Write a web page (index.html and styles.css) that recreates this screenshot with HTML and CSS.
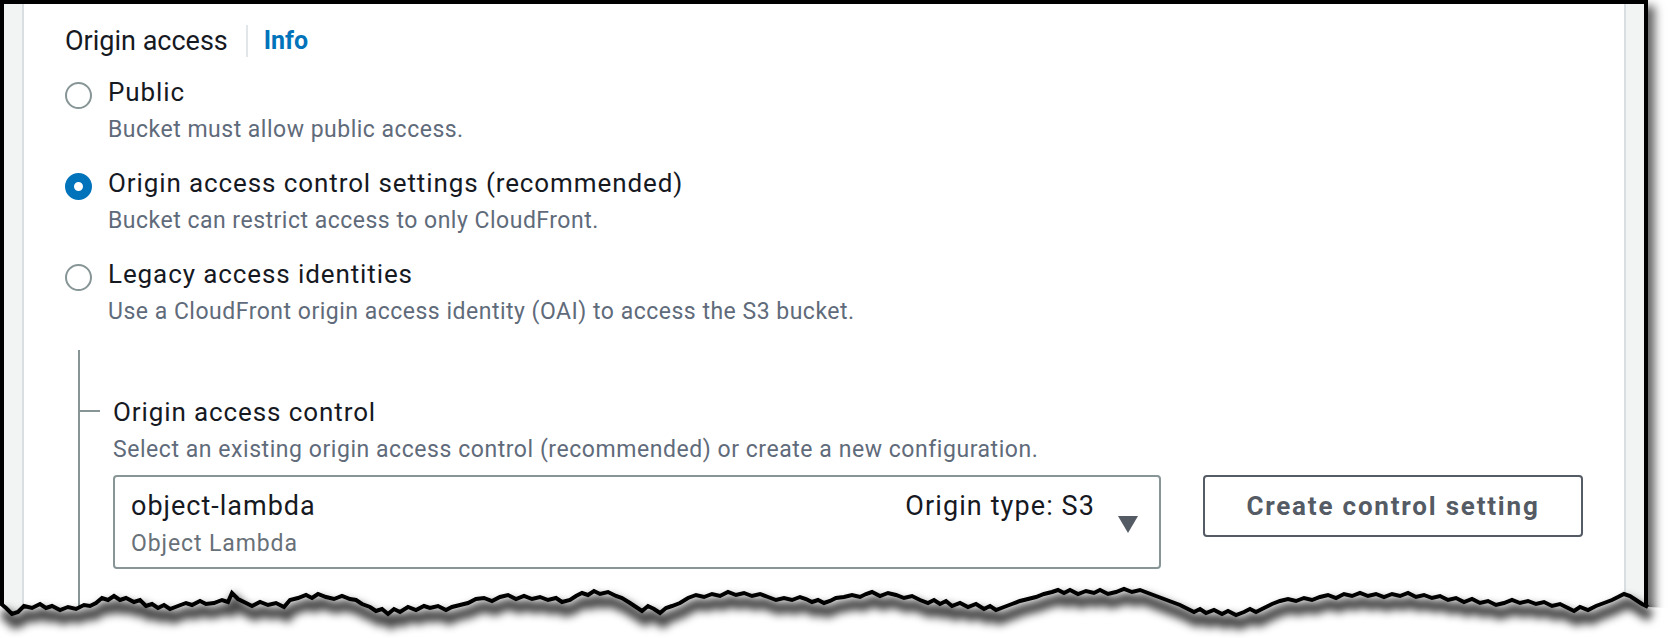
FILE: index.html
```html
<!DOCTYPE html>
<html lang="en">
<head>
<meta charset="utf-8">
<title>Origin access</title>
<link rel="stylesheet" href="styles.css">
</head>
<body>
<div class="frame">
  <div class="paper">
    <div class="strip strip-left"></div>
    <main class="main">
      <div class="field-head">
        <span class="field-title">Origin access</span>
        <span class="sep"></span>
        <a class="info">Info</a>
      </div>
      <div class="options">
        <div class="option">
          <span class="radio"></span>
          <div class="option-text">
            <div class="option-label">Public</div>
            <div class="option-desc">Bucket must allow public access.</div>
          </div>
        </div>
        <div class="option">
          <span class="radio radio-on"></span>
          <div class="option-text">
            <div class="option-label">Origin access control settings (recommended)</div>
            <div class="option-desc">Bucket can restrict access to only CloudFront.</div>
          </div>
        </div>
        <div class="option">
          <span class="radio"></span>
          <div class="option-text">
            <div class="option-label">Legacy access identities</div>
            <div class="option-desc">Use a CloudFront origin access identity (OAI) to access the S3 bucket.</div>
          </div>
        </div>
      </div>
      <section class="expand">
        <div class="sub-title">Origin access control</div>
        <div class="sub-desc">Select an existing origin access control (recommended) or create a new configuration.</div>
        <div class="control-row">
          <div class="select">
            <div class="select-main">
              <div class="select-name">object-lambda</div>
              <div class="select-sub">Object Lambda</div>
            </div>
            <div class="select-meta">Origin type: S3</div>
            <svg class="caret" width="20" height="17" viewBox="0 0 20 17"><polygon points="0,0 20,0 10,17" fill="#545b64"/></svg>
          </div>
          <button class="btn">Create control setting</button>
        </div>
      </section>
    </main>
    <div class="strip strip-right"></div>
  </div>
  <svg class="torn" width="1668" height="638" viewBox="0 0 1668 638">
    <defs>
      <filter id="blur" x="-5%" y="-200%" width="110%" height="500%">
        <feGaussianBlur stdDeviation="4"/>
      </filter>
      <polyline id="edge" points="0,603 6,608 12,614 18,612 24,606 32,608 40,604 46,608 52,606 60,610 68,607 76,609 84,605 90,606 96,603 102,598 108,600 114,596 120,600 126,598 134,602 140,600 146,606 152,604 158,608 164,605 170,609 178,606 186,603 192,605 200,601 206,604 214,603 222,600 228,602 232,593 238,599 246,603 252,606 260,602 268,605 276,603 284,607 290,600 298,598 306,595 312,598 318,594 326,597 334,599 342,596 350,599 356,600 362,604 370,607 376,611 382,609 388,614 394,609 400,612 408,607 416,610 424,606 430,608 438,606 446,610 452,607 460,605 468,603 476,599 484,598 492,601 500,597 508,595 516,599 524,596 532,599 540,597 548,600 556,598 562,602 570,600 576,596 582,593 588,595 594,591 600,594 608,592 616,596 622,598 630,603 636,607 642,611 648,606 654,609 660,613 666,608 672,606 680,603 688,598 696,595 704,597 712,594 720,596 728,592 736,595 744,593 752,596 760,594 768,597 776,600 784,598 792,600 800,597 806,599 812,602 818,600 824,603 830,601 836,598 844,597 852,595 860,597 866,594 872,592 880,596 888,593 896,595 904,598 912,596 920,600 928,603 934,600 940,604 946,601 952,606 960,603 968,607 976,604 984,609 990,606 996,610 1004,607 1012,604 1020,601 1028,599 1036,597 1044,594 1052,592 1058,590 1064,593 1070,590 1078,594 1086,591 1094,593 1100,590 1108,594 1116,592 1124,589 1132,592 1140,590 1148,593 1156,596 1164,599 1172,602 1180,605 1188,609 1194,612 1200,609 1206,613 1214,610 1222,614 1228,611 1236,615 1244,612 1250,609 1256,612 1264,608 1272,604 1280,601 1288,599 1296,601 1304,598 1312,600 1320,597 1328,595 1336,598 1344,594 1352,596 1360,593 1368,596 1376,594 1384,597 1392,594 1400,596 1408,593 1416,597 1424,595 1432,598 1440,596 1448,600 1456,598 1464,602 1472,599 1480,603 1488,601 1496,605 1504,603 1512,600 1520,603 1528,601 1536,604 1544,602 1552,606 1560,604 1568,608 1574,611 1580,607 1588,610 1596,606 1604,603 1612,600 1618,597 1624,594 1630,596 1636,600 1642,604 1648,607"/>
    </defs>
    <polygon fill="#ffffff" points="0,603 6,608 12,614 18,612 24,606 32,608 40,604 46,608 52,606 60,610 68,607 76,609 84,605 90,606 96,603 102,598 108,600 114,596 120,600 126,598 134,602 140,600 146,606 152,604 158,608 164,605 170,609 178,606 186,603 192,605 200,601 206,604 214,603 222,600 228,602 232,593 238,599 246,603 252,606 260,602 268,605 276,603 284,607 290,600 298,598 306,595 312,598 318,594 326,597 334,599 342,596 350,599 356,600 362,604 370,607 376,611 382,609 388,614 394,609 400,612 408,607 416,610 424,606 430,608 438,606 446,610 452,607 460,605 468,603 476,599 484,598 492,601 500,597 508,595 516,599 524,596 532,599 540,597 548,600 556,598 562,602 570,600 576,596 582,593 588,595 594,591 600,594 608,592 616,596 622,598 630,603 636,607 642,611 648,606 654,609 660,613 666,608 672,606 680,603 688,598 696,595 704,597 712,594 720,596 728,592 736,595 744,593 752,596 760,594 768,597 776,600 784,598 792,600 800,597 806,599 812,602 818,600 824,603 830,601 836,598 844,597 852,595 860,597 866,594 872,592 880,596 888,593 896,595 904,598 912,596 920,600 928,603 934,600 940,604 946,601 952,606 960,603 968,607 976,604 984,609 990,606 996,610 1004,607 1012,604 1020,601 1028,599 1036,597 1044,594 1052,592 1058,590 1064,593 1070,590 1078,594 1086,591 1094,593 1100,590 1108,594 1116,592 1124,589 1132,592 1140,590 1148,593 1156,596 1164,599 1172,602 1180,605 1188,609 1194,612 1200,609 1206,613 1214,610 1222,614 1228,611 1236,615 1244,612 1250,609 1256,612 1264,608 1272,604 1280,601 1288,599 1296,601 1304,598 1312,600 1320,597 1328,595 1336,598 1344,594 1352,596 1360,593 1368,596 1376,594 1384,597 1392,594 1400,596 1408,593 1416,597 1424,595 1432,598 1440,596 1448,600 1456,598 1464,602 1472,599 1480,603 1488,601 1496,605 1504,603 1512,600 1520,603 1528,601 1536,604 1544,602 1552,606 1560,604 1568,608 1574,611 1580,607 1588,610 1596,606 1604,603 1612,600 1618,597 1624,594 1630,596 1636,600 1642,604 1648,607 1668,608 1668,638 0,638"/>
    <use href="#edge" class="edge-shadow" transform="translate(3,9)" filter="url(#blur)"/>
    <use href="#edge" class="edge-line"/>
  </svg>
</div>
</body>
</html>
```
FILE: styles.css
```css
body {
  margin: 0;
  background: #ffffff;
  font-family: Roboto, "Liberation Sans", sans-serif;
  color: #16191f;
}

.frame {
  position: relative;
  width: 1668px;
  height: 638px;
  overflow: hidden;
  background: #ffffff;
}

.paper {
  display: flex;
  width: 1648px;
  height: 628px;
  box-sizing: border-box;
  border: 4px solid #000000;
  border-bottom: 0;
  background: #ffffff;
  box-shadow: 7px 6px 9px rgba(0, 0, 0, 0.6);
}

.strip {
  flex: none;
  width: 18px;
  background: #f2f3f3;
}

.strip-left {
  border-right: 2px solid #d9dee0;
}

.strip-right {
  border-left: 2px solid #d9dee0;
}

.main {
  flex: 1;
  display: flex;
  flex-direction: column;
  padding: 19px 0 0 41px;
}

.field-head {
  display: flex;
  align-items: center;
  height: 36px;
}

.field-title {
  font-size: 27px;
  line-height: 36px;
}

.sep {
  width: 2px;
  height: 32px;
  margin: 0 16px 0 18px;
  background: #e3e6e8;
}

.info {
  font-size: 25px;
  line-height: 36px;
  font-weight: 700;
  color: #0073bb;
}

.options {
  display: flex;
  flex-direction: column;
  gap: 21px;
  margin-top: 16px;
}

.option {
  display: grid;
  grid-template-columns: 27px 1fr;
  column-gap: 16px;
  align-items: start;
}

.radio {
  width: 27px;
  height: 27px;
  margin-top: 7px;
  box-sizing: border-box;
  border: 2px solid #879596;
  border-radius: 50%;
  background: #ffffff;
}

.radio-on {
  border: 9px solid #0073bb;
}

.option-label {
  font-size: 26px;
  line-height: 34px;
  letter-spacing: 0.9px;
}

.option-desc {
  margin-top: 6px;
  font-size: 23px;
  line-height: 30px;
  letter-spacing: 0.5px;
  color: #5f6b7a;
}

.expand {
  flex: 1;
  margin: 23px 0 0 13px;
  padding: 45px 0 0 33px;
  border-left: 2px solid #879596;
}

.sub-title {
  position: relative;
  font-size: 26px;
  line-height: 34px;
  letter-spacing: 0.9px;
}

.sub-title::before {
  content: "";
  position: absolute;
  left: -33px;
  top: 15px;
  width: 20px;
  height: 2px;
  background: #879596;
}

.sub-desc {
  margin-top: 6px;
  font-size: 23px;
  line-height: 30px;
  letter-spacing: 0.55px;
  color: #5f6b7a;
}

.control-row {
  display: flex;
  align-items: flex-start;
  gap: 42px;
  margin-top: 10px;
}

.select {
  display: flex;
  align-items: flex-start;
  width: 1048px;
  height: 94px;
  box-sizing: border-box;
  padding: 12px 21px 8px 16px;
  border: 2px solid #879596;
  border-radius: 4px;
}

.select-main {
  flex: 1;
}

.select-name {
  font-size: 27px;
  line-height: 34px;
  letter-spacing: 1px;
}

.select-sub {
  margin-top: 6px;
  font-size: 23px;
  line-height: 30px;
  letter-spacing: 0.9px;
  color: #687078;
}

.select-meta {
  font-size: 27px;
  line-height: 34px;
  letter-spacing: 1.1px;
}

.caret {
  align-self: center;
  margin-left: 23px;
  flex: none;
}

.btn {
  width: 380px;
  height: 62px;
  box-sizing: border-box;
  border: 2px solid #545b64;
  border-radius: 4px;
  background: #ffffff;
  font-family: Roboto, "Liberation Sans", sans-serif;
  font-size: 26px;
  font-weight: 700;
  letter-spacing: 1.8px;
  color: #545b64;
  padding: 0;
}

.torn {
  position: absolute;
  left: 0;
  top: 0;
  pointer-events: none;
}

.edge-shadow {
  fill: none;
  stroke: rgba(0, 0, 0, 0.75);
  stroke-width: 11;
}

.edge-line {
  fill: none;
  stroke: #000000;
  stroke-width: 4;
  stroke-linejoin: miter;
}
```
